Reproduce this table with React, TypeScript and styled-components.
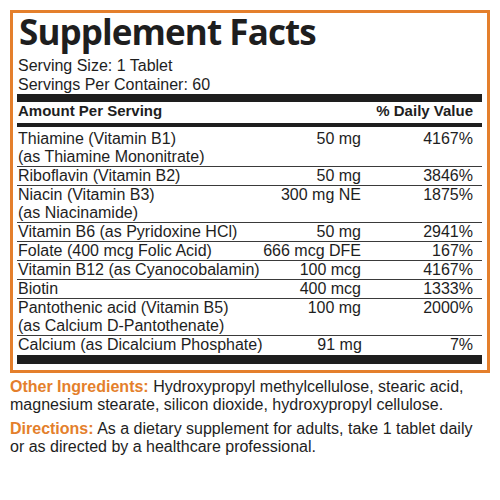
import styled, {createGlobalStyle} from "styled-components";

const orange = '#e47f2c';
const ink = '#1e1e1e';

const nutrients = [
    {name: ['Thiamine (Vitamin B1)', '(as Thiamine Mononitrate)'], amount: '50 mg', dv: '4167%'},
    {name: ['Riboflavin (Vitamin B2)'], amount: '50 mg', dv: '3846%'},
    {name: ['Niacin (Vitamin B3)', '(as Niacinamide)'], amount: '300 mg NE', dv: '1875%'},
    {name: ['Vitamin B6 (as Pyridoxine HCl)'], amount: '50 mg', dv: '2941%'},
    {name: ['Folate (400 mcg Folic Acid)'], amount: '666 mcg DFE', dv: '167%'},
    {name: ['Vitamin B12 (as Cyanocobalamin)'], amount: '100 mcg', dv: '4167%'},
    {name: ['Biotin'], amount: '400 mcg', dv: '1333%'},
    {name: ['Pantothenic acid (Vitamin B5)', '(as Calcium D-Pantothenate)'], amount: '100 mg', dv: '2000%'},
    {name: ['Calcium (as Dicalcium Phosphate)'], amount: '91 mg', dv: '7%'},
];

const GlobalStyle = createGlobalStyle`
    body {
        margin: 0;
        background: #fff;
        font-family: "Liberation Sans", Arial, sans-serif;
        color: ${ink};
    }
`

export default function App() {
    return (<Page>
        <GlobalStyle/>
        <Frame>
            <Title>Supplement Facts</Title>
            <Serving>Serving Size: 1 Tablet</Serving>
            <Serving>Servings Per Container: 60</Serving>
            <Bar size={8}/>
            <Header>
                <span>Amount Per Serving</span>
                <span>% Daily Value</span>
            </Header>
            <Bar size={4}/>
            <Rows>
                {nutrients.map((n, index) => (<Row key={index} last={index === nutrients.length - 1}>
                    <Name>{n.name.map((line, i) => <div key={i}>{line}</div>)}</Name>
                    <Amount>{n.amount}</Amount>
                    <Value>{n.dv}</Value>
                </Row>))}
            </Rows>
            <Bar size={9}/>
        </Frame>
        <Notes>
            <Note>
                <Label>Other Ingredients:</Label> Hydroxypropyl methylcellulose, stearic acid, magnesium stearate, silicon dioxide, hydroxypropyl cellulose.
            </Note>
            <Note>
                <Label>Directions:</Label> As a dietary supplement for adults, take 1 tablet daily or as directed by a healthcare professional.
            </Note>
        </Notes>
    </Page>)
}

const Page = styled.div`
    width: 500px;
    height: 500px;
    padding: 10px 10px 0;
    box-sizing: border-box;
    overflow: hidden;
`

const Frame = styled.div`
    border: 3px solid ${orange};
    padding: 0 5px 6px 4px;
`

const Title = styled.h1`
    margin: 2px 0 7px 2px;
    font-family: "Open Sans", sans-serif;
    font-weight: 700;
    font-size: 35px;
    line-height: 34px;
    letter-spacing: -0.9px;
    color: ${ink};
`

const Serving = styled.div`
    font-size: 16px;
    line-height: 19px;
    padding-left: 1px;
`

const Bar = styled.div<{ size: number }>`
    height: ${props => props.size}px;
    background: ${ink};
`

const Header = styled.div`
    display: flex;
    justify-content: space-between;
    font-size: 15px;
    font-weight: 700;
    line-height: 18px;
    padding: 0 9px 3px 1px;
`

const Rows = styled.div`
    padding-top: 3px;
`

const Row = styled.div<{ last: boolean }>`
    display: flex;
    font-size: 16px;
    line-height: 18px;
    padding-left: 1px;
    border-bottom: ${props => props.last ? '1px solid transparent' : '1px solid #3a3a3a'};
`

const Name = styled.div`
    flex: 1;
    white-space: nowrap;
`

const Amount = styled.div`
    width: 100px;
    text-align: right;
    white-space: nowrap;
`

const Value = styled.div`
    width: 112px;
    padding-right: 9px;
    text-align: right;
`

const Notes = styled.div`
    display: flex;
    flex-direction: column;
    gap: 6px;
    padding-top: 5px;
`

const Note = styled.p`
    margin: 0;
    font-size: 16px;
    line-height: 18px;
`

const Label = styled.span`
    color: ${orange};
    font-weight: 700;
`
